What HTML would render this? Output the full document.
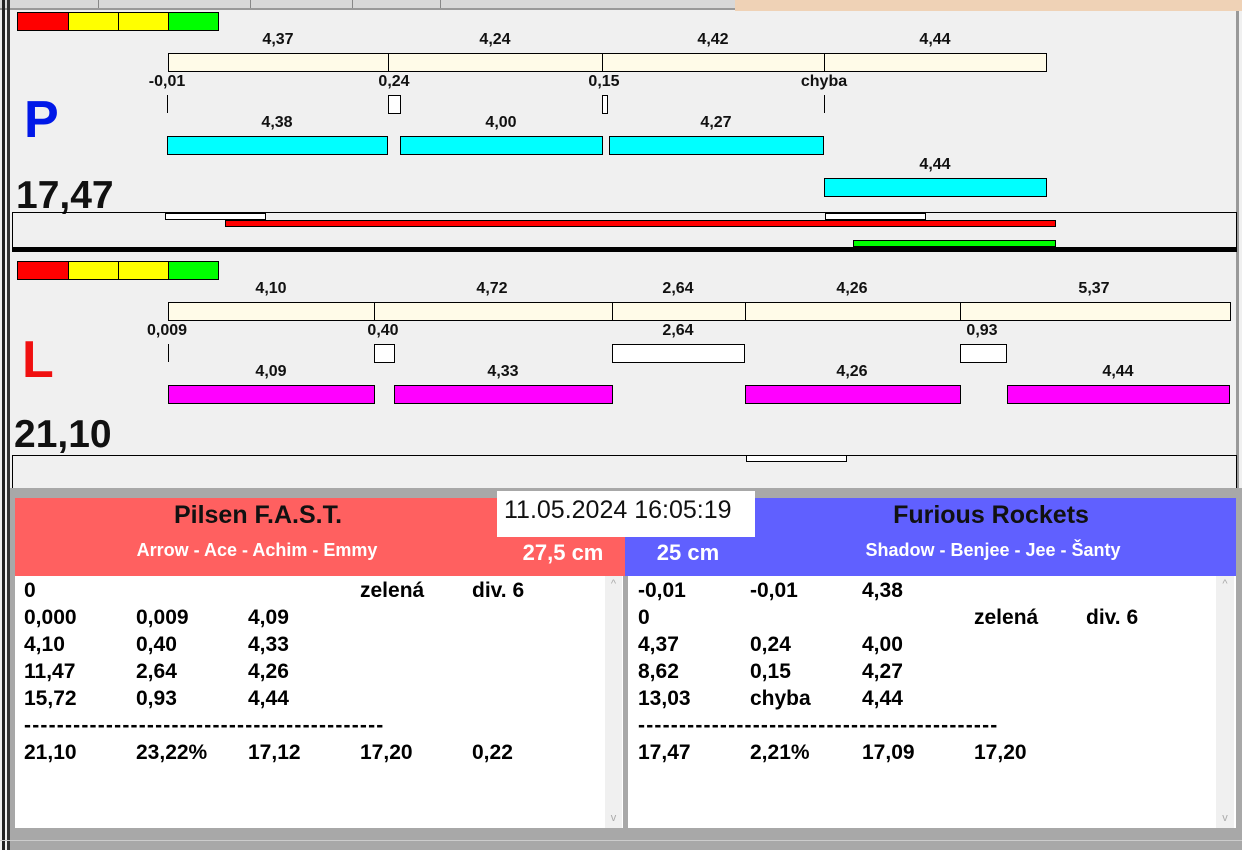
<!DOCTYPE html>
<html><head><meta charset="utf-8"><style>
*{margin:0;padding:0;box-sizing:border-box}
body{width:1242px;height:850px;position:relative;background:#f0f0f0;font-family:"Liberation Sans",Arial,sans-serif;overflow:hidden}
div{position:absolute}
.b{border:1px solid #000}
.t{font-weight:bold;font-size:16px;color:#111;white-space:nowrap;transform:translateX(-50%);line-height:16px}
.cr{background:#fffbe8}
.cy{background:#00ffff}
.mg{background:#ff00ff}
.w{background:#fff}
.r{font-weight:bold;font-size:21px;color:#000;white-space:nowrap;line-height:24px}
.d{font-weight:bold;font-size:21px;color:#000;white-space:nowrap;line-height:24px;letter-spacing:1.2px}
</style></head><body>
<!-- top strip -->
<div style="left:0;top:0;width:735px;height:10px;background:#d8d8d8;border-bottom:2px solid #999"></div>
<div style="left:735px;top:0;width:507px;height:11px;background:#efd2b6"></div>
<div style="left:98px;top:0;width:1px;height:8px;background:#888"></div>
<div style="left:250px;top:0;width:1px;height:8px;background:#888"></div>
<div style="left:352px;top:0;width:1px;height:8px;background:#888"></div>
<div style="left:440px;top:0;width:1px;height:8px;background:#888"></div>
<!-- left border -->
<div style="left:2px;top:0;width:3px;height:850px;background:#222"></div>
<div style="left:7px;top:0;width:3px;height:850px;background:#333"></div>
<div style="left:1236px;top:11px;width:3px;height:480px;background:#999"></div>

<!-- P section -->
<div class="b" style="left:17px;top:12px;width:52px;height:19px;background:#f00"></div>
<div class="b" style="left:68px;top:12px;width:51px;height:19px;background:#ff0"></div>
<div class="b" style="left:118px;top:12px;width:51px;height:19px;background:#ff0"></div>
<div class="b" style="left:168px;top:12px;width:51px;height:19px;background:#0f0"></div>

<div class="t" style="left:278px;top:32px">4,37</div>
<div class="t" style="left:495px;top:32px">4,24</div>
<div class="t" style="left:713px;top:32px">4,42</div>
<div class="t" style="left:935px;top:32px">4,44</div>
<div class="b cr" style="left:168px;top:53px;width:879px;height:19px"></div>
<div style="left:388px;top:53px;width:1px;height:19px;background:#000"></div>
<div style="left:602px;top:53px;width:1px;height:19px;background:#000"></div>
<div style="left:824px;top:53px;width:1px;height:19px;background:#000"></div>

<div class="t" style="left:167px;top:74px">-0,01</div>
<div class="t" style="left:394px;top:74px">0,24</div>
<div class="t" style="left:604px;top:74px">0,15</div>
<div class="t" style="left:824px;top:74px">chyba</div>
<div style="left:167px;top:95px;width:1px;height:18px;background:#000"></div>
<div class="b w" style="left:388px;top:95px;width:13px;height:19px"></div>
<div class="b w" style="left:602px;top:95px;width:6px;height:19px"></div>
<div style="left:824px;top:95px;width:1px;height:18px;background:#000"></div>

<div class="t" style="left:277px;top:115px">4,38</div>
<div class="t" style="left:501px;top:115px">4,00</div>
<div class="t" style="left:716px;top:115px">4,27</div>
<div class="b cy" style="left:167px;top:136px;width:221px;height:19px"></div>
<div class="b cy" style="left:400px;top:136px;width:203px;height:19px"></div>
<div class="b cy" style="left:609px;top:136px;width:215px;height:19px"></div>
<div class="t" style="left:935px;top:157px">4,44</div>
<div class="b cy" style="left:824px;top:178px;width:223px;height:19px"></div>

<div style="left:24px;top:90px;font-size:52px;font-weight:bold;color:#0018e8;line-height:60px">P</div>
<div style="left:16px;top:174px;font-size:39px;font-weight:bold;color:#111;line-height:44px">17,47</div>

<div style="left:12px;top:212px;width:1225px;height:36px;border:1px solid #000;border-bottom:none"></div>
<div class="b w" style="left:165px;top:213px;width:101px;height:7px"></div>
<div class="b w" style="left:825px;top:213px;width:101px;height:7px"></div>
<div class="b" style="left:225px;top:220px;width:831px;height:7px;background:#f00"></div>
<div class="b" style="left:853px;top:240px;width:203px;height:7px;background:#0f0"></div>
<div style="left:12px;top:247px;width:1225px;height:5px;background:#000"></div>

<!-- L section -->
<div class="b" style="left:17px;top:261px;width:52px;height:19px;background:#f00"></div>
<div class="b" style="left:68px;top:261px;width:51px;height:19px;background:#ff0"></div>
<div class="b" style="left:118px;top:261px;width:51px;height:19px;background:#ff0"></div>
<div class="b" style="left:168px;top:261px;width:51px;height:19px;background:#0f0"></div>

<div class="t" style="left:271px;top:281px">4,10</div>
<div class="t" style="left:492px;top:281px">4,72</div>
<div class="t" style="left:678px;top:281px">2,64</div>
<div class="t" style="left:852px;top:281px">4,26</div>
<div class="t" style="left:1094px;top:281px">5,37</div>
<div class="b cr" style="left:168px;top:302px;width:1063px;height:19px"></div>
<div style="left:374px;top:302px;width:1px;height:19px;background:#000"></div>
<div style="left:612px;top:302px;width:1px;height:19px;background:#000"></div>
<div style="left:745px;top:302px;width:1px;height:19px;background:#000"></div>
<div style="left:960px;top:302px;width:1px;height:19px;background:#000"></div>

<div class="t" style="left:167px;top:323px">0,009</div>
<div class="t" style="left:383px;top:323px">0,40</div>
<div class="t" style="left:678px;top:323px">2,64</div>
<div class="t" style="left:982px;top:323px">0,93</div>
<div style="left:168px;top:344px;width:1px;height:18px;background:#000"></div>
<div class="b w" style="left:374px;top:344px;width:21px;height:19px"></div>
<div class="b w" style="left:612px;top:344px;width:133px;height:19px"></div>
<div class="b w" style="left:960px;top:344px;width:47px;height:19px"></div>

<div class="t" style="left:271px;top:364px">4,09</div>
<div class="t" style="left:503px;top:364px">4,33</div>
<div class="t" style="left:852px;top:364px">4,26</div>
<div class="t" style="left:1118px;top:364px">4,44</div>
<div class="b mg" style="left:168px;top:385px;width:207px;height:19px"></div>
<div class="b mg" style="left:394px;top:385px;width:219px;height:19px"></div>
<div class="b mg" style="left:745px;top:385px;width:216px;height:19px"></div>
<div class="b mg" style="left:1007px;top:385px;width:223px;height:19px"></div>

<div style="left:22px;top:330px;font-size:52px;font-weight:bold;color:#f01010;line-height:60px">L</div>
<div style="left:14px;top:413px;font-size:39px;font-weight:bold;color:#111;line-height:44px">21,10</div>

<div style="left:12px;top:455px;width:1225px;height:34px;border:1px solid #000;border-bottom:none"></div>
<div class="b w" style="left:746px;top:455px;width:101px;height:7px"></div>

<!-- bottom area -->
<div style="left:10px;top:488px;width:1232px;height:362px;background:#a8a8a8"></div>
<div style="left:15px;top:498px;width:610px;height:78px;background:#ff6060"></div>
<div style="left:625px;top:498px;width:611px;height:78px;background:#6060ff"></div>
<div style="left:497px;top:491px;width:258px;height:46px;background:#fff"></div>
<div style="left:504px;top:495px;font-size:25px;color:#111;line-height:30px">11.05.2024 16:05:19</div>
<div class="t" style="left:258px;top:502px;font-size:25px;line-height:26px">Pilsen F.A.S.T.</div>
<div class="t" style="left:257px;top:540px;font-size:18px;color:#fff;line-height:20px">Arrow - Ace - Achim - Emmy</div>
<div class="t" style="left:563px;top:541px;font-size:22px;color:#fff;line-height:24px">27,5 cm</div>
<div class="t" style="left:991px;top:502px;font-size:25px;line-height:26px">Furious Rockets</div>
<div class="t" style="left:688px;top:541px;font-size:22px;color:#fff;line-height:24px">25 cm</div>
<div class="t" style="left:993px;top:540px;font-size:18px;color:#fff;line-height:20px">Shadow - Benjee - Jee - Šanty</div>

<div style="left:15px;top:576px;width:608px;height:252px;background:#fff"></div>
<div style="left:605px;top:576px;width:17px;height:252px;background:#f0f0f0;color:#aaa;font-size:11px;text-align:center;padding-top:2px">^</div>
<div style="left:605px;top:812px;width:17px;color:#aaa;font-size:11px;text-align:center">v</div>
<div style="left:628px;top:576px;width:608px;height:252px;background:#fff"></div>
<div style="left:1216px;top:576px;width:18px;height:252px;background:#f0f0f0;color:#aaa;font-size:11px;text-align:center;padding-top:2px">^</div>
<div style="left:1216px;top:812px;width:18px;color:#aaa;font-size:11px;text-align:center">v</div>
<div style="left:0;top:840px;width:1242px;height:1px;background:#ccc"></div>

<!-- left rows -->
<div class="r" style="left:24px;top:579px">0</div><div class="r" style="left:360px;top:579px">zelená</div><div class="r" style="left:472px;top:579px">div. 6</div>
<div class="r" style="left:24px;top:606px">0,000</div><div class="r" style="left:136px;top:606px">0,009</div><div class="r" style="left:248px;top:606px">4,09</div>
<div class="r" style="left:24px;top:633px">4,10</div><div class="r" style="left:136px;top:633px">0,40</div><div class="r" style="left:248px;top:633px">4,33</div>
<div class="r" style="left:24px;top:660px">11,47</div><div class="r" style="left:136px;top:660px">2,64</div><div class="r" style="left:248px;top:660px">4,26</div>
<div class="r" style="left:24px;top:687px">15,72</div><div class="r" style="left:136px;top:687px">0,93</div><div class="r" style="left:248px;top:687px">4,44</div>
<div class="d" style="left:24px;top:714px;width:361px;overflow:hidden">--------------------------------------------</div>
<div class="r" style="left:24px;top:741px">21,10</div><div class="r" style="left:136px;top:741px">23,22%</div><div class="r" style="left:248px;top:741px">17,12</div><div class="r" style="left:360px;top:741px">17,20</div><div class="r" style="left:472px;top:741px">0,22</div>

<!-- right rows -->
<div class="r" style="left:638px;top:579px">-0,01</div><div class="r" style="left:750px;top:579px">-0,01</div><div class="r" style="left:862px;top:579px">4,38</div>
<div class="r" style="left:638px;top:606px">0</div><div class="r" style="left:974px;top:606px">zelená</div><div class="r" style="left:1086px;top:606px">div. 6</div>
<div class="r" style="left:638px;top:633px">4,37</div><div class="r" style="left:750px;top:633px">0,24</div><div class="r" style="left:862px;top:633px">4,00</div>
<div class="r" style="left:638px;top:660px">8,62</div><div class="r" style="left:750px;top:660px">0,15</div><div class="r" style="left:862px;top:660px">4,27</div>
<div class="r" style="left:638px;top:687px">13,03</div><div class="r" style="left:750px;top:687px">chyba</div><div class="r" style="left:862px;top:687px">4,44</div>
<div class="d" style="left:638px;top:714px;width:360px;overflow:hidden">--------------------------------------------</div>
<div class="r" style="left:638px;top:741px">17,47</div><div class="r" style="left:750px;top:741px">2,21%</div><div class="r" style="left:862px;top:741px">17,09</div><div class="r" style="left:974px;top:741px">17,20</div>
</body></html>
